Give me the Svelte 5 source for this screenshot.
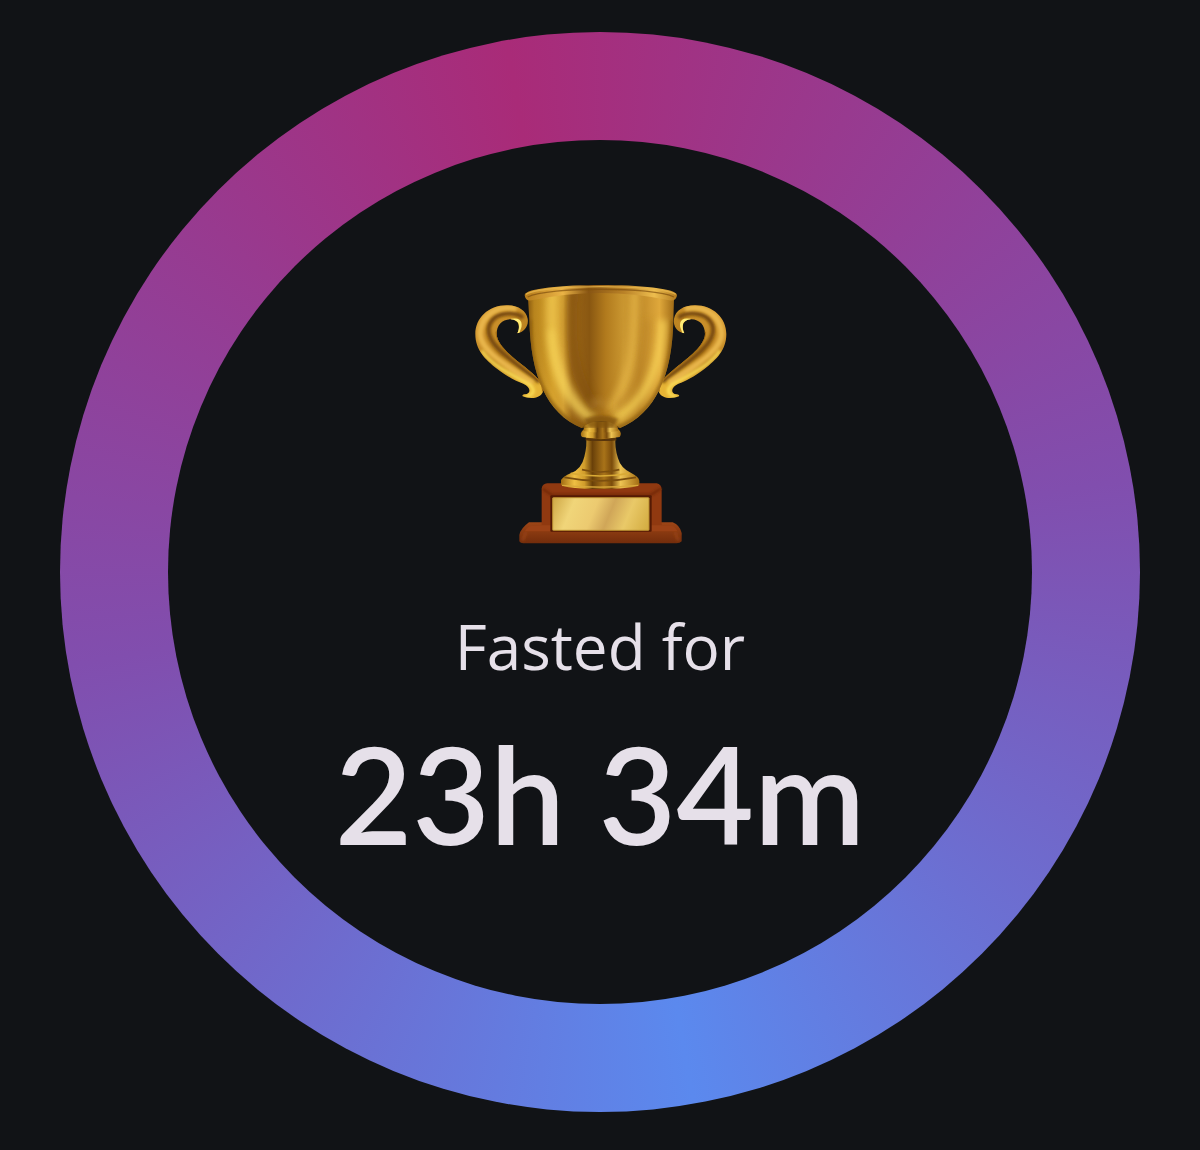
<script lang="ts">
	interface Props {
		label?: string;
		hours?: number;
		minutes?: number;
	}

	let { label = 'Fasted for', hours = 23, minutes = 34 }: Props = $props();
</script>

<svelte:head>
	<title>{label} {hours}h {minutes}m</title>
</svelte:head>

{#snippet handle()}
	<path
		d="M172 190 C191 187 207 170 203 146 C198 122 175 106 140 106 C85 106 46 145 46 192 C46 240 75 268 112 297 C143 320 168 334 190 341 C213 351 214 371 195 373 C189 373 186 376 188 379 C212 388 240 386 249 365 C253 337 226 318 196 292 C161 264 111 227 110 192 C110 165 126 149 151 148 C172 148 184 164 172 190Z"
		fill="url(#handle)"
	/>
	<g clip-path="url(#handle-clip)">
		<path d="M190 143 C160 122 94 125 86 174 C80 220 137 259 239 335" stroke="#75470b" stroke-width="13" filter="url(#soft)" />
		<path d="M170 116 C112 104 64 134 60 190 C61 241 134 283 218 340" stroke="#e9b64c" stroke-width="17" filter="url(#soft)" />
		<path d="M65 242 C94 284 144 309 211 345 Q234 370 197 381" stroke="#ffe45b" stroke-width="8" filter="url(#soft)" />
		<path d="M154 151 Q184 145 180 170 L173 190" stroke="#ffec74" stroke-width="9" filter="url(#fine)" />
		<path d="M110 185 C110 225 158 258 196 292 C226 318 253 337 249 365" stroke="#a36a12" stroke-width="7" />
	</g>
{/snippet}

<main>
	<div class="ring">
		<div class="face">
			<svg class="trophy" viewBox="39 42 762 780" fill="none" role="img" aria-label="Trophy">
				<defs>
					<linearGradient id="cup" x1="205" x2="642" y1="0" y2="0" gradientUnits="userSpaceOnUse">
						<stop offset="0" stop-color="#8e5e10" />
						<stop offset=".04" stop-color="#b8841d" />
						<stop offset=".17" stop-color="#d5a12d" />
						<stop offset=".24" stop-color="#d3a034" />
						<stop offset=".3" stop-color="#9c6719" />
						<stop offset=".42" stop-color="#895711" />
						<stop offset=".53" stop-color="#b17a1d" />
						<stop offset=".65" stop-color="#c99630" />
						<stop offset=".76" stop-color="#be8828" />
						<stop offset=".9" stop-color="#dfa83b" />
						<stop offset="1" stop-color="#a16c17" />
					</linearGradient>
					<linearGradient id="stem" x1="0" x2="1">
						<stop offset="0" stop-color="#a16c12" />
						<stop offset=".17" stop-color="#efbf43" />
						<stop offset=".3" stop-color="#d09c2b" />
						<stop offset=".4" stop-color="#694009" />
						<stop offset=".55" stop-color="#a87319" />
						<stop offset=".65" stop-color="#7a4b0b" />
						<stop offset=".76" stop-color="#eec453" />
						<stop offset="1" stop-color="#a26c13" />
					</linearGradient>
					<linearGradient id="handle" x1="46" x2="230" y1="130" y2="350" gradientUnits="userSpaceOnUse">
						<stop stop-color="#d99d34" />
						<stop offset=".5" stop-color="#b9801e" />
						<stop offset="1" stop-color="#e6b435" />
					</linearGradient>
					<linearGradient id="rim" x1="0" x2="1">
						<stop stop-color="#b57b1b" />
						<stop offset=".25" stop-color="#eab346" />
						<stop offset=".42" stop-color="#885513" />
						<stop offset=".65" stop-color="#b98127" />
						<stop offset=".85" stop-color="#edbd4e" />
						<stop offset="1" stop-color="#b17a1f" />
					</linearGradient>
					<linearGradient id="plate" x1="278" x2="567" y1="670" y2="790" gradientUnits="userSpaceOnUse">
						<stop stop-color="#cba341" />
						<stop offset=".22" stop-color="#f0d579" />
						<stop offset=".43" stop-color="#ecca70" />
						<stop offset=".58" stop-color="#d0a658" />
						<stop offset=".75" stop-color="#e9c968" />
						<stop offset="1" stop-color="#d1a93d" />
					</linearGradient>
					<linearGradient id="wood" x1="0" x2="0" y1="0" y2="1">
						<stop stop-color="#9d4516" />
						<stop offset="1" stop-color="#722c0b" />
					</linearGradient>
					<filter id="soft" x="-50%" y="-50%" width="200%" height="200%"><feGaussianBlur stdDeviation="5" /></filter>
					<filter id="fine" x="-50%" y="-50%" width="200%" height="200%"><feGaussianBlur stdDeviation="2" /></filter>
					<filter id="wide" x="-50%" y="-50%" width="200%" height="200%"><feGaussianBlur stdDeviation="11" /></filter>
					<clipPath id="cup-clip">
						<path d="M204 86 Q422 40 642 86 L640 150 C637 318 586 430 480 474 H365 C260 430 212 318 208 150Z" />
					</clipPath>
					<clipPath id="handle-clip">
						<path d="M172 190 C191 187 207 170 203 146 C198 122 175 106 140 106 C85 106 46 145 46 192 C46 240 75 268 112 297 C143 320 168 334 190 341 C213 351 214 371 195 373 C189 373 186 376 188 379 C212 388 240 386 249 365 C253 337 226 318 196 292 C161 264 111 227 110 192 C110 165 126 149 151 148 C172 148 184 164 172 190Z" />
					</clipPath>
				</defs>

				{@render handle()}
				<g transform="translate(845 0) scale(-1 1)">{@render handle()}</g>

				<!-- wooden base -->
				<path d="M178 814 V795 Q182 775 207 757 H638 Q660 766 665 789 V814 Q660 820 649 820 H190 Q181 820 178 814Z" fill="url(#wood)" />
				<path d="M195 784 Q199 771 215 767 H635 Q647 771 652 784Z" fill="#9c4216" />
				<path d="M188 812 L198 786 M655 812 L645 786" stroke="#a34818" stroke-width="5" filter="url(#soft)" />
				<path d="M245 765 V656 Q247 641 262 640 H590 Q604 643 605 658 V765Z" fill="#903910" />
				<path d="M247 656 L275 675 H572 L604 655" stroke="#5f1d05" stroke-width="5" filter="url(#soft)" />
				<path d="M252 651 H600" stroke="#a84819" stroke-width="8" filter="url(#fine)" />
				<rect x="271" y="676" width="304" height="109" rx="3" fill="#541a04" />
				<rect x="278" y="683" width="289" height="98" rx="2" fill="url(#plate)" stroke="#b88e31" stroke-width="3" />

				<!-- stem -->
				<path d="M303 630 Q310 619 332 610 Q365 597 373 560 Q382 525 378 500 H467 Q463 530 474 565 Q482 595 515 610 Q535 620 538 632 V644 Q526 656 421 657 Q315 656 303 644Z" fill="url(#stem)" />
				<path d="M313 622 Q420 643 528 622" stroke="#7c4f10" stroke-width="5" filter="url(#fine)" />
				<path d="M332 610 Q420 626 508 610" stroke="#d9aa35" stroke-width="5" filter="url(#fine)" />
				<path d="M366 599 Q420 613 478 599" stroke="#7c4f10" stroke-width="5" filter="url(#fine)" />
				<path d="M306 646 Q420 657 535 646" stroke="#d9a93a" stroke-width="4" filter="url(#fine)" />
				<path d="M370 479 Q357 491 366 501 Q423 511 479 501 Q488 490 475 478Z" fill="url(#stem)" />
				<path d="M377 507 Q423 515 469 507" stroke="#583407" stroke-width="7" filter="url(#fine)" />
				<path d="M375 455 H470 L475 483 Q423 492 370 483Z" fill="url(#stem)" />

				<!-- cup -->
				<path d="M204 86 Q422 40 642 86 L640 150 C637 318 586 430 480 474 Q455 453 423 453 Q390 453 365 474 C260 430 212 318 208 150Z" fill="url(#cup)" />
				<g clip-path="url(#cup-clip)">
					<path d="M277 60 C267 230 286 360 402 449" stroke="#f8d35c" stroke-width="34" opacity=".6" filter="url(#wide)" />
					<path d="M272 180 C284 340 335 410 386 438" stroke="#ffe364" stroke-width="17" opacity=".55" filter="url(#wide)" />
					<path d="M340 60 C326 220 342 330 408 413" stroke="#83510e" stroke-width="30" opacity=".65" filter="url(#wide)" />
					<path d="M525 60 C523 260 512 338 450 420" stroke="#eabb4b" stroke-width="28" opacity=".7" filter="url(#wide)" />
					<path d="M608 150 C602 310 548 399 466 443" stroke="#ffde5e" stroke-width="24" opacity=".7" filter="url(#wide)" />
					<path d="M562 150 C552 320 520 370 470 411" stroke="#bb8427" stroke-width="18" opacity=".6" filter="url(#wide)" />
					<path d="M208 150 C211 320 265 437 380 477 M640 150 C636 320 580 437 470 475" stroke="#8a5c11" stroke-width="14" opacity=".75" filter="url(#soft)" />
					<ellipse cx="415" cy="398" rx="26" ry="13" fill="#c0903a" opacity=".5" filter="url(#wide)" />
					<path d="M373 447 Q423 425 474 447 L460 474 H385Z" fill="#81520f" opacity=".8" filter="url(#soft)" />
				</g>
				<path d="M194 75 C198 35 647 35 651 75 Q650 94 628 91 Q422 47 215 91 Q195 94 194 75Z" fill="url(#rim)" />
				<path d="M203 81 C265 50 580 50 642 81" stroke="#805011" stroke-width="4" opacity=".7" filter="url(#fine)" />
				<path d="M198 73 C244 42 601 42 647 73" stroke="#e8b64c" stroke-width="4" opacity=".8" filter="url(#fine)" />
			</svg>
			<p class="label">{label}</p>
			<h1>{hours}h {minutes}m</h1>
		</div>
	</div>
</main>

<style>
	:global(body) {
		margin: 0;
		background: #111316;
	}
	main {
		padding: 32px 5% 38px;
		color: #e6e0e9;
		font-family: Lato, 'Open Sans', sans-serif;
	}
	.ring {
		display: grid;
		box-sizing: border-box;
		aspect-ratio: 1;
		padding: 10%;
		border-radius: 50%;
		background: conic-gradient(from -10deg, #a92b78, #814eae 90deg, #5b89ee 180deg, #814eae 270deg, #a92b78);
	}
	.face {
		display: flex;
		flex-direction: column;
		align-items: center;
		padding-top: 144px;
		border-radius: 50%;
		background: #111316;
	}
	.trophy {
		width: 254px;
		height: 260px;
	}
	.label {
		margin: 66px 0 0;
		font-family: 'Open Sans', 'Noto Sans', sans-serif;
		font-size: 62px;
		font-weight: 400;
		line-height: 72px;
	}
	h1 {
		margin: 32px 0 0;
		font-size: 134px;
		font-weight: 600;
		line-height: 160px;
	}
</style>
